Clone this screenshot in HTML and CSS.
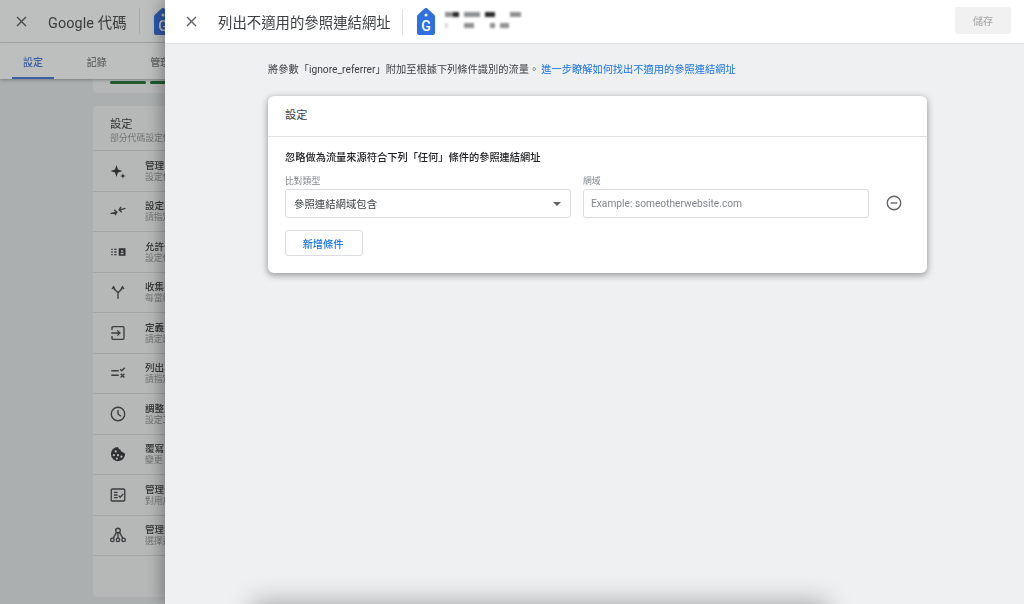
FILE: index.html
```html
<!DOCTYPE html>
<html>
<head>
  <meta charset="utf-8">
  <title>列出不適用的參照連結網址</title>
  <link rel="stylesheet" href="styles.css">
</head>
<body>
  <!-- Page behind the sliding panel -->
  <div class="backdrop">
    <header class="back-header">
      <svg class="back-close" viewBox="0 0 24 24"><path d="M19 6.41L17.59 5 12 10.59 6.41 5 5 6.41 10.59 12 5 17.59 6.41 19 12 13.41 17.59 19 19 17.59 13.41 12z"/></svg>
      <span class="back-title">Google 代碼</span>
      <span class="back-divider"></span>
      <svg class="back-tag" viewBox="0 0 18 27">
        <path d="M7.600.600a2 2 0 0 1 2.800 0l7 6.400a2 2 0 0 1 .6 1.400V25a2 2 0 0 1-2 2H2a2 2 0 0 1-2-2V8.400A2 2 0 0 1 .6 7z"/>
        <circle cx="9" cy="7" r="1.500"/>
        <text x="9" y="22.500" text-anchor="middle">G</text>
      </svg>
    </header>
    <nav class="back-tabs">
      <span class="back-tab active">設定</span>
      <span class="back-tab">記錄</span>
      <span class="back-tab">管理</span>
    </nav>
    <div class="back-content">
      <div class="back-card-top">
        <span class="green-bar"></span>
        <span class="green-bar"></span>
      </div>
      <div class="back-card">
        <div class="back-card-head">
          <div class="back-card-title">設定</div>
          <div class="back-card-sub">部分代碼設定僅適用</div>
        </div>
        <div class="back-row">
          <svg class="back-icon" viewBox="0 0 24 24"><path class="solid" d="M10 4l2 6 6 2-6 2-2 6-2-6-6-2 6-2zM18.500 15l1 2.500 2.500 1-2.500 1-1 2.500-1-2.500-2.500-1 2.500-1z"/></svg>
          <div class="back-text"><b>管理自動事件偵測</b><small>設定代碼應自動偵測</small></div>
        </div>
        <div class="back-row">
          <svg class="back-icon" viewBox="0 0 24 24"><path d="M2 15.500l8-2M7 10.500l3.500 3-2.500 4M22 8.500l-8 2M17 13.500l-3.500-3 2.500-4"/></svg>
          <div class="back-text"><b>設定網域</b><small>請指定網域</small></div>
        </div>
        <div class="back-row">
          <svg class="back-icon" viewBox="0 0 24 24"><path d="M3 8.500h2M7 8.500h3M3 12h2M7 12h3M3 15.500h2M7 15.500h3"/><path class="solid" d="M13 7h9v10h-9zM16 9.500v2h3v-2zM15.500 13v2h4v-2z"/></svg>
          <div class="back-text"><b>允許使用者</b><small>設定代碼</small></div>
        </div>
        <div class="back-row">
          <svg class="back-icon" viewBox="0 0 24 24"><path d="M12 21v-8L6 7M12 13l6-6M4 8l2-3 2 3M16 8l2-3 2 3"/></svg>
          <div class="back-text"><b>收集通用</b><small>每當網頁</small></div>
        </div>
        <div class="back-row">
          <svg class="back-icon" viewBox="0 0 24 24"><path d="M4 8V5a1.500 1.500 0 0 1 1.500-1.500h13A1.500 1.500 0 0 1 20 5v14a1.500 1.500 0 0 1-1.500 1.500h-13A1.500 1.500 0 0 1 4 19v-3M3 12h11M11 8.500l3.500 3.500-3.500 3.500"/></svg>
          <div class="back-text"><b>定義內部</b><small>請定義</small></div>
        </div>
        <div class="back-row">
          <svg class="back-icon" viewBox="0 0 24 24"><path d="M3 9h10M3 15h10M15 7l2 2 4-4M15.500 13l5 5M20.500 13l-5 5"/></svg>
          <div class="back-text"><b>列出不適</b><small>請指定</small></div>
        </div>
        <div class="back-row">
          <svg class="back-icon" viewBox="0 0 24 24"><circle cx="12" cy="12" r="9"/><path d="M12 6.500V12l4 3"/></svg>
          <div class="back-text"><b>調整工作</b><small>設定工作</small></div>
        </div>
        <div class="back-row">
          <svg class="back-icon" viewBox="0 0 24 24"><path class="solid" fill-rule="evenodd" d="M12 2.500c.3 2 1.500 3.300 3.200 3.500.2 2.200 1.800 3.600 3.800 3.600.5 1 1.500 1.600 2.500 1.700A9.500 9.500 0 1 1 12 2.500zM9 7a1.500 1.500 0 1 0 0 3 1.500 1.500 0 0 0 0-3zM6.500 12a1.500 1.500 0 1 0 0 3 1.500 1.500 0 0 0 0-3zM12 12a1.500 1.500 0 1 0 0 3 1.500 1.500 0 0 0 0-3zM16.500 14a1.500 1.500 0 1 0 0 3 1.500 1.500 0 0 0 0-3zM10.500 16.500a1.500 1.500 0 1 0 0 3 1.500 1.500 0 0 0 0-3z"/></svg>
          <div class="back-text"><b>覆寫 Cookie</b><small>變更</small></div>
        </div>
        <div class="back-row">
          <svg class="back-icon" viewBox="0 0 24 24"><rect x="3" y="4" width="18" height="16" rx="1.500"/><path d="M6.500 8.500h5M6.500 12h5M6.500 15.500h5M13 13l2 2 4-4.500"/></svg>
          <div class="back-text"><b>管理代碼</b><small>對用戶</small></div>
        </div>
        <div class="back-row">
          <svg class="back-icon" viewBox="0 0 24 24"><circle cx="12" cy="6" r="3"/><circle cx="4.500" cy="18.500" r="2.300"/><circle cx="12" cy="18.500" r="2.300"/><circle cx="19.500" cy="18.500" r="2.300"/><path d="M12 9v7M10 8.500l-4.500 8M14 8.500l4.500 8"/></svg>
          <div class="back-text"><b>管理連結</b><small>選擇連結</small></div>
        </div>
      </div>
    </div>
  </div>

  <!-- Sliding panel -->
  <section class="panel">
    <header class="panel-header">
      <svg class="panel-close" viewBox="0 0 24 24"><path d="M19 6.41L17.59 5 12 10.59 6.41 5 5 6.41 10.59 12 5 17.59 6.41 19 12 13.41 17.59 19 19 17.59 13.41 12z"/></svg>
      <h1 class="panel-title">列出不適用的參照連結網址</h1>
      <span class="panel-divider"></span>
      <svg class="tag-icon" viewBox="0 0 18 27">
        <path d="M7.600.600a2 2 0 0 1 2.800 0l7 6.400a2 2 0 0 1 .6 1.400V25a2 2 0 0 1-2 2H2a2 2 0 0 1-2-2V8.400A2 2 0 0 1 .6 7z"/>
        <circle cx="9" cy="7" r="1.500"/>
        <text x="9" y="22.500" text-anchor="middle">G</text>
      </svg>
      <div class="redacted">
        <div class="redacted-row">
          <i class="r8 mid"></i><i class="r6 dark"></i><i class="r5 gap mid"></i><i class="r11 mid"></i><i class="r10 gap dark"></i><i class="r11 gap-wide mid"></i>
        </div>
        <div class="redacted-row">
          <i class="r3 pale"></i><i class="r10 gap-start mid"></i><i class="r5 gap-mid mid"></i><i class="r9 gap mid"></i>
        </div>
      </div>
      <button class="save-btn">儲存</button>
    </header>

    <div class="panel-body">
      <p class="intro">將參數「ignore_referrer」附加至根據下列條件識別的流量。<a href="#">進一步瞭解如何找出不適用的參照連結網址</a></p>

      <div class="card">
        <div class="card-title">設定</div>
        <div class="card-body">
          <div class="rule-heading">忽略做為流量來源符合下列「任何」條件的參照連結網址</div>
          <div class="rule-row">
            <div class="field">
              <label>比對類型</label>
              <div class="select">
                <span>參照連結網域包含</span>
                <span class="caret"></span>
              </div>
            </div>
            <div class="field">
              <label>網域</label>
              <div class="input">Example: someotherwebsite.com</div>
            </div>
            <svg class="remove-icon" viewBox="0 0 24 24"><circle cx="12" cy="12" r="9"/><path d="M7.500 12h9"/></svg>
          </div>
          <button class="add-btn">新增條件</button>
        </div>
      </div>

      <div class="next-card"></div>
    </div>
  </section>
</body>
</html>
```

FILE: styles.css
```css
/* Base */
* {
  box-sizing: border-box;
}

html, body {
  height: 100%;
}

body {
  margin: 0;
  position: relative;
  overflow: hidden;
  background-color: #acafb0;
  font-family: Roboto, 'Noto Sans CJK TC', sans-serif;
  color: #3c4043;
}

/* Page behind the panel */
.backdrop {
  height: 604px;
  overflow: hidden;
  filter: blur(0.5px);
}

.back-header {
  display: flex;
  align-items: center;
  height: 43px;
  padding-left: 13px;
  background-color: #bdbebe;
  border-bottom: 1px solid #a9abab;
}

.back-close {
  width: 17px;
  height: 17px;
  fill: #4a4b4c;
}

.back-title {
  margin-left: 18px;
  font-size: 14.400px;
  letter-spacing: 0.1px;
  color: #3a3b3c;
}

.back-divider {
  width: 1px;
  height: 26px;
  margin-left: 12px;
  background-color: #a9abab;
}

.back-tag {
  width: 18px;
  height: 27px;
  margin-left: 14px;
  fill: #2c57a8;
}

.back-tag circle,
.back-tag text {
  fill: #bdbebe;
}

.back-tag text {
  font-size: 14px;
  font-weight: 500;
}

.back-tabs {
  position: relative;
  z-index: 1;
  display: flex;
  height: 36px;
  background-color: #bdbebe;
  box-shadow: 0 1px 3px rgba(0, 0, 0, 0.3);
}

.back-tab {
  width: 63.500px;
  padding-top: 11px;
  font-size: 10px;
  font-weight: 500;
  text-align: center;
  color: #5f6163;
  border-bottom: 2px solid transparent;
}

.back-tab.active {
  width: 42px;
  margin: 0 11px 0 12px;
  color: #3a5da3;
  border-bottom-color: #3a5da3;
}

.back-content {
  padding-left: 93px;
}

.back-card-top {
  display: flex;
  gap: 4px;
  height: 14px;
  padding: 2px 0 0 17px;
  background-color: #b6b7b7;
  border-radius: 0 0 4px 4px;
}

.green-bar {
  width: 36px;
  height: 3px;
  border-radius: 2px;
  background-color: #1e5c30;
}

.back-card {
  margin-top: 13px;
  height: 491px;
  background-color: #b6b7b7;
  border-radius: 4px;
}

.back-card-head {
  height: 45px;
  padding: 12px 0 0 17px;
  border-bottom: 1px solid #a3a5a5;
}

.back-card-title {
  font-size: 11.200px;
  line-height: 14px;
  color: #333;
}

.back-card-sub {
  font-size: 8.800px;
  line-height: 12px;
  white-space: nowrap;
  color: #717374;
}

.back-row {
  display: flex;
  align-items: center;
  height: 40.500px;
  border-bottom: 1px solid #a3a5a5;
}

.back-icon {
  flex: none;
  width: 18px;
  height: 18px;
  margin-left: 16px;
  fill: none;
  stroke: #3b3d3f;
  stroke-width: 1.800;
}

.back-icon .solid {
  fill: #2f3133;
  stroke: none;
}

.back-text {
  display: flex;
  flex-direction: column;
  margin-left: 18px;
  padding-top: 1px;
  white-space: nowrap;
}

.back-text b {
  font-size: 9.600px;
  line-height: 12px;
  font-weight: 500;
  color: #333;
}

.back-text small {
  font-size: 8.800px;
  line-height: 11px;
  color: #717374;
}

/* Panel */
.panel {
  position: absolute;
  top: 0;
  left: 165px;
  right: 0;
  bottom: 0;
  overflow: hidden;
  background-color: #eff0f2;
  box-shadow: -4px 0 14px rgba(0, 0, 0, 0.3);
}

.panel-header {
  display: flex;
  align-items: center;
  height: 44px;
  padding-left: 18px;
  padding-right: 13px;
  background-color: #fff;
  border-bottom: 1px solid #dfe0e2;
}

.panel-close {
  width: 17px;
  height: 17px;
  fill: #5f6368;
}

.panel-title {
  margin: 0 0 0 18px;
  font-size: 14.400px;
  font-weight: 400;
  color: #3c4043;
  filter: blur(0.3px);
}

.panel-divider {
  width: 1px;
  height: 26px;
  margin-left: 11px;
  background-color: #e0e1e3;
}

.tag-icon {
  width: 18px;
  height: 27px;
  margin-left: 14px;
  fill: #2f6fe0;
}

.tag-icon circle,
.tag-icon text {
  fill: #fff;
}

.tag-icon text {
  font-family: Roboto, sans-serif;
  font-size: 14px;
  font-weight: 500;
}

/* Blurred-out account name */
.redacted {
  display: flex;
  flex-direction: column;
  gap: 6px;
  margin-left: 10px;
  margin-bottom: 3px;
  filter: blur(1.1px);
}

.redacted-row {
  display: flex;
  height: 5px;
}

.redacted-row i {
  display: block;
  height: 100%;
}

.r3 { width: 3px; }
.r5 { width: 5px; }
.r6 { width: 6px; }
.r8 { width: 8px; }
.r9 { width: 9px; }
.r10 { width: 10px; }
.r11 { width: 11px; }
.gap { margin-left: 5px; }
.gap-wide { margin-left: 15px; }
.gap-start { margin-left: 16px; }
.gap-mid { margin-left: 16px; }
.mid { background-color: #8f9091; }
.dark { background-color: #2a2a2b; }
.pale { background-color: #dcdcdc; }

.save-btn {
  width: 56px;
  height: 27px;
  margin-left: auto;
  margin-bottom: 2px;
  padding: 0;
  border: 0;
  border-radius: 3px;
  background-color: #f1f1f1;
  font-family: inherit;
  font-size: 10px;
  color: #a2a2a2;
  filter: blur(0.3px);
}

.panel-body {
  display: flex;
  flex-direction: column;
  padding: 18px 0 0 103px;
}

.intro {
  margin: 0 0 19px;
  font-size: 10.240px;
  line-height: 15px;
  color: #3c4043;
  filter: blur(0.3px);
}

.intro a {
  margin-left: 2px;
  color: #1a73e8;
  text-decoration: none;
}

/* Card */
.card {
  width: 659px;
  height: 177px;
  border-radius: 6px;
  background-color: #fff;
  box-shadow: 0 2px 6px 1px rgba(0, 0, 0, 0.32);
}

.card-title {
  height: 41px;
  padding: 12px 0 0 17px;
  font-size: 11.200px;
  line-height: 15px;
  border-bottom: 1px solid #dfe0e2;
}

.card-body {
  padding: 14px 17px 0;
  filter: blur(0.3px);
}

.rule-heading {
  font-size: 10.220px;
  line-height: 13px;
  font-weight: 500;
  color: #202124;
}

.rule-row {
  display: flex;
  align-items: flex-end;
  gap: 12px;
  margin-top: 12px;
}

.field {
  display: flex;
  flex-direction: column;
  width: 286px;
}

.field label {
  font-size: 8.800px;
  line-height: 11px;
  margin-bottom: 2px;
  color: #80868b;
}

.select,
.input {
  display: flex;
  align-items: center;
  height: 29px;
  padding-left: 8px;
  border: 1px solid #dadce0;
  border-radius: 3px;
  font-size: 10.400px;
}

.select {
  justify-content: space-between;
  padding-right: 9px;
}

.input {
  padding-left: 7px;
  font-size: 10.200px;
  color: #80868b;
}

.caret {
  width: 0;
  height: 0;
  border-left: 4px solid transparent;
  border-right: 4px solid transparent;
  border-top: 4px solid #5f6368;
}

.remove-icon {
  width: 18px;
  height: 18px;
  margin: 0 0 6px 4px;
  fill: none;
  stroke: #5f6368;
  stroke-width: 1.800;
}

.add-btn {
  display: block;
  width: 78px;
  height: 26px;
  margin-top: 12px;
  padding: 0 2px 0 0;
  border: 1px solid #dadce0;
  border-radius: 3px;
  background-color: #fff;
  font-family: inherit;
  font-size: 10.200px;
  font-weight: 500;
  color: #1a73e8;
}

/* Top of the next card, only its shadow shows */
.next-card {
  width: 560px;
  height: 40px;
  margin-top: 336px;
  margin-left: -8px;
  background-color: #fff;
  box-shadow: 0 0 24px 8px rgba(0, 0, 0, 0.28);
}
```
